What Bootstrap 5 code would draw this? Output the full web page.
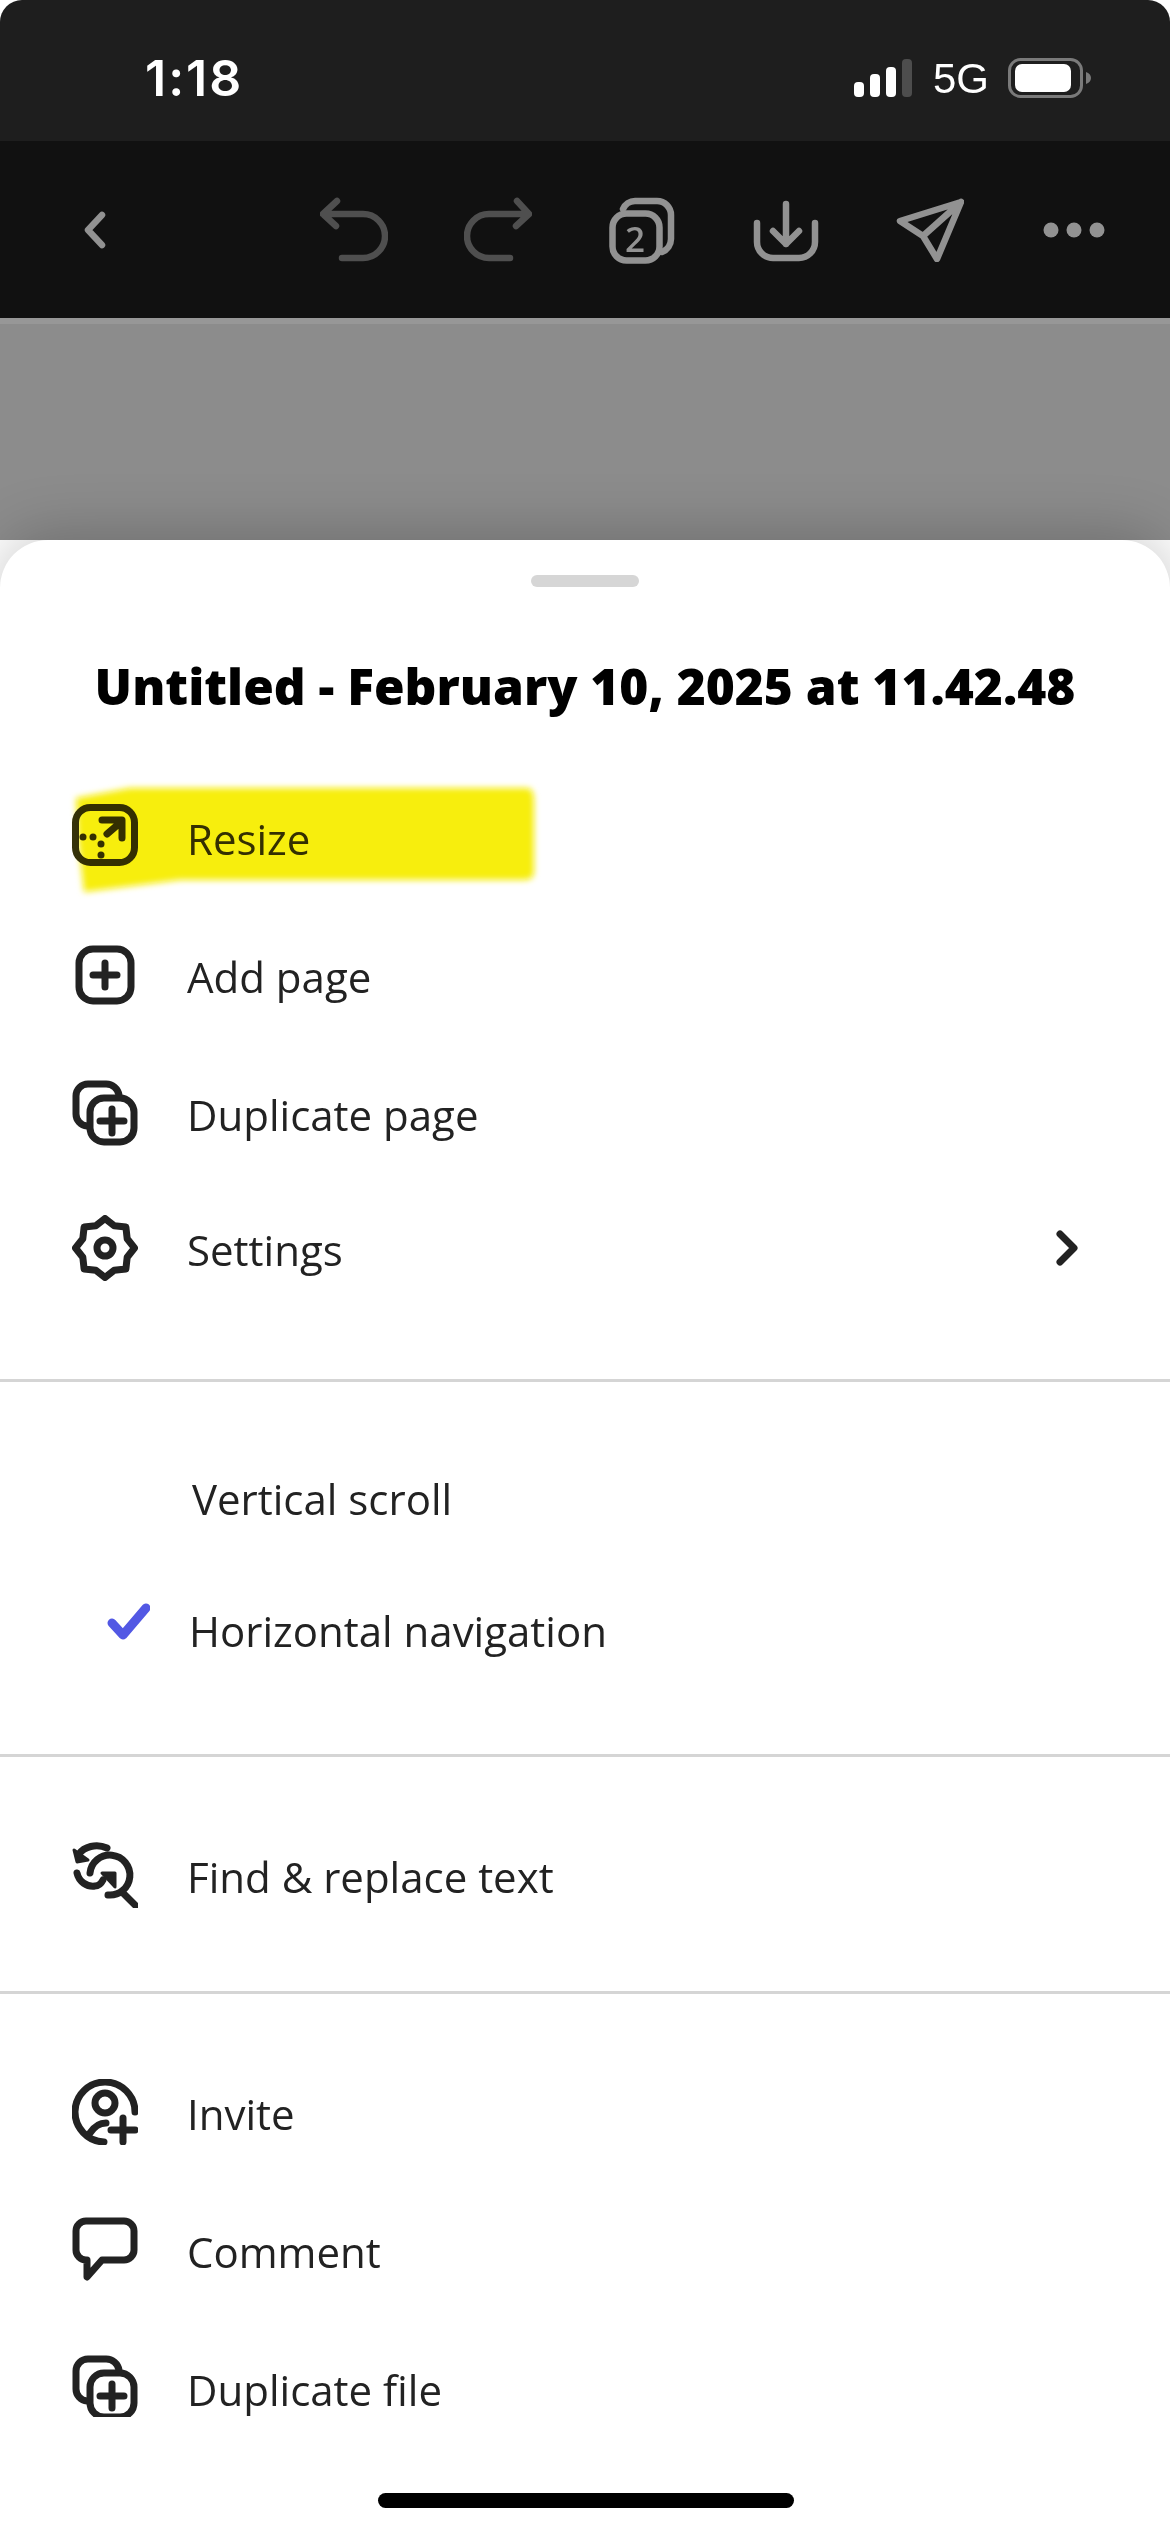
<!DOCTYPE html>
<html lang="en">

<head>
  <meta charset="UTF-8">
  <meta name="viewport" content="width=device-width, initial-scale=1.0">
  <title>Untitled</title>
  <link rel="stylesheet" href="https://cdn.jsdelivr.net/npm/bootstrap@5.3.3/dist/css/bootstrap.min.css">
  <script src="https://cdn.jsdelivr.net/npm/bootstrap@5.3.3/dist/js/bootstrap.bundle.min.js"></script>
  <style>
    body { background: #fff; font-family: "Open Sans", "Noto Sans", sans-serif; color: #222; }
    .phone { width: 1170px; height: 2532px; overflow: hidden; }
    .status-bar { height: 141px; background: #1e1e1e; color: #fff; padding: 14px 78px 0 145px; border-radius: 22px 22px 0 0; }
    .status-time { font-family: Inter, sans-serif; font-weight: 600; font-size: 50px; letter-spacing: 2px; line-height: 1; }
    .status-net { font-family: "Liberation Sans", sans-serif; font-size: 42px; line-height: 1; margin: 2px 19px 0 21px; }
    .tool-bar { height: 177px; background: #111; padding-left: 23px; }
    .tool-cell { width: 144px; height: 100%; }
    .tool-back { margin-right: 115px; }
    .backdrop { height: 222px; background: #8c8c8c; border-top: 6px solid #979797; }
    .sheet { height: 1992px; background: #fff; border-radius: 48px 48px 0 0; box-shadow: 0 -6px 60px rgba(0,0,0,.22); position: relative; overflow: hidden; }
    .sheet-handle { width: 108px; height: 12px; background: #d6d6d6; border-radius: 6px; margin: 35px auto 0; }
    .sheet-title { font-family: "Open Sans", sans-serif; font-weight: 800; font-size: 49.6px; color: #000; text-align: center; line-height: 68px; margin: 65px 0 48px; }
    .menu-row { height: 138px; padding-left: 72px; font-size: 42px; line-height: 1; }
    .menu-row span { padding-top: 3px; }
    .menu-row svg.row-icon { width: 66px; height: 66px; flex: none; margin-right: 49px; }
    .menu-row svg.row-icon-cut { height: 62px; margin-bottom: 4px; }
    .row-marked { color: #35320a; }
    .row-settings { margin-top: -3px; margin-bottom: 3px; }
    .menu-chevron { margin-left: auto; margin-right: 90px; flex: none; }
    .sheet-rule { height: 3px; background: #d5d5d5; border: 0; margin: 0; opacity: 1; }
    .group-one { padding-bottom: 59px; }
    .view-row { height: 132px; font-size: 42px; line-height: 1; padding-top: 3px; }
    .view-list { padding: 49px 0 59px; }
    .view-check { width: 189px; padding-left: 106px; margin-bottom: 17px; }
    .view-plain { padding-left: 192px; }
    .group-find { padding: 49px 0 47px; }
    .group-share { padding-top: 49px; }
    .marker { position: absolute; left: 60px; top: 240px; width: 496px; height: 130px; mix-blend-mode: multiply; pointer-events: none; }
    .home-bar { position: absolute; left: 378px; top: 1953px; width: 416px; height: 15px; background: #000; border-radius: 8px; }
    .ico { fill: none; stroke: #222; stroke-width: 7; stroke-linecap: round; stroke-linejoin: round; }
    .ico-marked { stroke: #35320a; }
    .tool-ico { fill: none; stroke: #929292; stroke-width: 6.5; stroke-linecap: round; stroke-linejoin: round; }
    .tool-ico-off { stroke: #4f4f4f; }
  </style>
</head>

<body>
  <div class="phone">
    <div class="status-bar d-flex align-items-center">
      <div class="status-time">1:18</div>
      <div class="ms-auto d-flex align-items-center">
        <svg width="58" height="38" viewBox="0 0 58 38">
          <rect x="0" y="23" width="10" height="15" rx="4" fill="#fff"/>
          <rect x="16" y="15" width="10" height="23" rx="4" fill="#fff"/>
          <rect x="32" y="8" width="10" height="30" rx="4" fill="#fff"/>
          <rect x="48" y="0" width="10" height="38" rx="4" fill="#4d4d4d"/>
        </svg>
        <div class="status-net">5G</div>
        <svg width="84" height="40" viewBox="0 0 84 40">
          <rect x="1.5" y="1.5" width="72" height="37" rx="11" fill="none" stroke="#7a7a7a" stroke-width="3"/>
          <rect x="7" y="6" width="56" height="28" rx="7" fill="#fff"/>
          <path d="M78 14c3 1 5 3 5 6s-2 5-5 6z" fill="#7a7a7a"/>
        </svg>
      </div>
    </div>

    <div class="tool-bar d-flex">
      <div class="tool-cell tool-back d-flex align-items-center justify-content-center">
        <svg width="26" height="38" viewBox="0 0 26 38"><path d="M20 4 6 19l14 15" class="tool-ico"/></svg>
      </div>
      <div class="tool-cell d-flex align-items-center justify-content-center">
        <svg width="68" height="66" viewBox="0 0 68 66"><path d="M17 4 3 17l13 12M3 17h40a22 22 0 0 1 0 44H22" class="tool-ico tool-ico-off"/></svg>
      </div>
      <div class="tool-cell d-flex align-items-center justify-content-center">
        <svg width="68" height="66" viewBox="0 0 68 66"><path d="M53 4l12 13-13 12M65 17H25a22 22 0 0 0 0 44h21" class="tool-ico tool-ico-off"/></svg>
      </div>
      <div class="tool-cell d-flex align-items-center justify-content-center">
        <svg width="66" height="68" viewBox="0 0 66 68">
          <path d="M14 13a13 13 0 0 1 12-8h22a14 14 0 0 1 14 14v24a14 14 0 0 1-9 13" class="tool-ico"/>
          <rect x="3.5" y="17.5" width="47" height="47" rx="14" class="tool-ico"/>
          <text x="26" y="56" text-anchor="middle" font-family="Open Sans, sans-serif" font-weight="600" font-size="35" fill="#929292">2</text>
        </svg>
      </div>
      <div class="tool-cell d-flex align-items-center justify-content-center">
        <svg width="68" height="64" viewBox="0 0 68 64"><path d="M34 6v40M21 33l13 13 13-13M5 25v19a16 16 0 0 0 16 16h26a16 16 0 0 0 16-16V25" class="tool-ico"/></svg>
      </div>
      <div class="tool-cell d-flex align-items-center justify-content-center">
        <svg width="68" height="64" viewBox="0 0 68 64"><path d="M65 4 4 23l23 15 14 23zM65 4 27 38" class="tool-ico"/></svg>
      </div>
      <div class="tool-cell d-flex align-items-center justify-content-center">
        <svg width="62" height="16" viewBox="0 0 62 16"><g fill="#929292"><circle cx="8" cy="8" r="7.5"/><circle cx="31" cy="8" r="7.5"/><circle cx="54" cy="8" r="7.5"/></g></svg>
      </div>
    </div>

    <div class="backdrop"></div>

    <div class="sheet">
      <div class="sheet-handle"></div>
      <div class="sheet-title">Untitled - February 10, 2025 at 11.42.48</div>

      <div class="group-one">
        <div class="menu-row row-marked d-flex align-items-center">
          <svg class="row-icon" viewBox="0 0 66 66">
            <rect x="3.5" y="3.5" width="59" height="55" rx="15" class="ico ico-marked"/>
            <path d="M30 16h20v18M49 18 35 30" class="ico ico-marked"/>
            <g fill="#35320a"><circle cx="11" cy="33" r="3.5"/><circle cx="21" cy="33" r="3.5"/><circle cx="29" cy="40" r="3.5"/><circle cx="29" cy="51" r="3.5"/></g>
          </svg>
          <span>Resize</span>
        </div>
        <div class="menu-row d-flex align-items-center">
          <svg class="row-icon" viewBox="0 0 66 66">
            <rect x="7" y="7" width="52" height="52" rx="14" class="ico"/>
            <path d="M33 21v24M21 33h24" class="ico"/>
          </svg>
          <span>Add page</span>
        </div>
        <div class="menu-row d-flex align-items-center">
          <svg class="row-icon" viewBox="0 0 66 66">
            <path d="M15 46a12 12 0 0 1-11-12V16A12 12 0 0 1 16 4h18a13 13 0 0 1 13 11" class="ico"/>
            <rect x="18" y="18" width="44" height="44" rx="14" class="ico"/>
            <path d="M40 29v24M28 41h24" class="ico"/>
          </svg>
          <span>Duplicate page</span>
        </div>
        <div class="menu-row row-settings d-flex align-items-center">
          <svg class="row-icon" viewBox="0 0 66 66">
            <path d="M33 3.500 42.200 10.800 53.900 12.100 55.200 23.800 62.500 33 55.200 42.200 53.900 53.900 42.200 55.200 33 62.500 23.800 55.200 12.100 53.900 10.800 42.200 3.500 33 10.800 23.800 12.100 12.100 23.800 10.800z" class="ico"/>
            <circle cx="33" cy="33" r="8" class="ico"/>
          </svg>
          <span>Settings</span>
          <svg class="menu-chevron" width="26" height="36" viewBox="0 0 26 36"><path d="M6 4l14 14L6 32" fill="none" stroke="#222" stroke-width="7" stroke-linecap="round" stroke-linejoin="round"/></svg>
        </div>
      </div>

      <hr class="sheet-rule">

      <div class="view-list">
        <div class="view-row view-plain d-flex align-items-center">Vertical scroll</div>
        <div class="view-row d-flex align-items-center">
          <div class="view-check">
            <svg width="44" height="40" viewBox="0 0 44 40" class="d-block"><path d="M6 21l11 12L40 6" fill="none" stroke="#5258e4" stroke-width="9" stroke-linecap="round" stroke-linejoin="round"/></svg>
          </div>
          <span>Horizontal navigation</span>
        </div>
      </div>

      <hr class="sheet-rule">

      <div class="group-find">
        <div class="menu-row d-flex align-items-center">
          <svg class="row-icon" viewBox="0 0 66 66">
            <path d="M2 8l3 12 11-2z" fill="#222" stroke="#222" stroke-width="3" stroke-linejoin="round"/>
            <path d="M7 12C12 5 24 1 35 6" class="ico"/>
            <path d="M18 31A20 20 0 1 1 36 53" class="ico"/>
            <path d="M5 31c2 9 10 14 18 13 3 0 6-2 8-6" class="ico"/>
            <path d="M30 31h13v14z" fill="#222" stroke="#222" stroke-width="3" stroke-linejoin="round"/>
            <path d="M51 51l13 13" class="ico"/>
          </svg>
          <span>Find &amp; replace text</span>
        </div>
      </div>

      <hr class="sheet-rule">

      <div class="group-share">
        <div class="menu-row d-flex align-items-center">
          <svg class="row-icon" viewBox="0 0 66 66">
            <path d="M63 33a30 30 0 1 0-31 30" class="ico"/>
            <circle cx="33" cy="24" r="10" class="ico"/>
            <path d="M34 44c-6 0-12 4-16 10" class="ico"/>
            <path d="M51 39v24M39 51h24" class="ico"/>
          </svg>
          <span>Invite</span>
        </div>
        <div class="menu-row d-flex align-items-center">
          <svg class="row-icon" viewBox="0 0 66 66">
            <path d="M14 4h38a10 10 0 0 1 10 10v19a10 10 0 0 1-10 10H30L15 60V43h-1A10 10 0 0 1 4 33V14A10 10 0 0 1 14 4z" class="ico"/>
          </svg>
          <span>Comment</span>
        </div>
        <div class="menu-row d-flex align-items-center">
          <svg class="row-icon row-icon-cut" viewBox="0 0 66 62">
            <path d="M15 46a12 12 0 0 1-11-12V16A12 12 0 0 1 16 4h18a13 13 0 0 1 13 11" class="ico"/>
            <rect x="18" y="18" width="44" height="44" rx="14" class="ico"/>
            <path d="M40 29v24M28 41h24" class="ico"/>
          </svg>
          <span>Duplicate file</span>
        </div>
      </div>

      <svg class="marker" viewBox="0 0 496 130">
        <defs><filter id="soft"><feGaussianBlur stdDeviation="3"/></filter></defs>
        <path d="M16 18 70 8l396 0c6 0 8 4 8 14v70c0 5-3 8-10 8H120L24 112 18 60z" fill="#f7ee08" filter="url(#soft)"/>
      </svg>
      <div class="home-bar"></div>
    </div>
  </div>
</body>

</html>
